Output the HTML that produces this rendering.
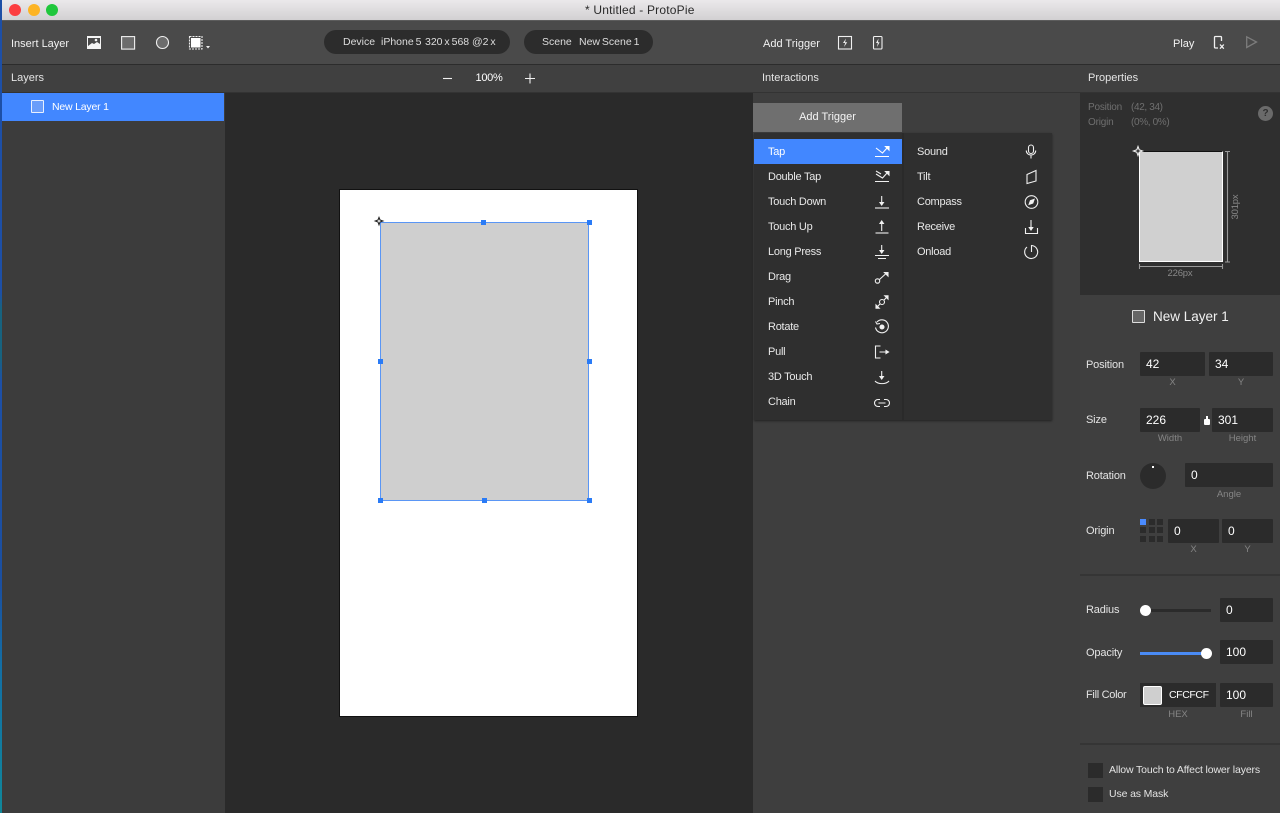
<!DOCTYPE html>
<html><head><meta charset="utf-8"><style>
html,body{margin:0;padding:0;width:1280px;height:813px;overflow:hidden;background:#3e3e3e}
body{position:relative;font-family:"Liberation Sans",sans-serif;font-size:11px;color:#e4e4e4}
div,svg{position:absolute}
.t{white-space:nowrap;line-height:14px;height:14px}
.c{text-align:center}
.p{letter-spacing:-.15px}
.i{background:#2b2b2b;border-radius:1px;color:#fff;font-size:12px;line-height:24px;height:24px;text-indent:6px}
.l{color:#858585;font-size:9.5px;text-align:center;line-height:12px;height:12px}
.m{color:#e8e8e8;font-size:11px;letter-spacing:-.25px;white-space:nowrap;line-height:14px;height:14px;left:0}
svg{fill:none;stroke:#f0f0f0;stroke-width:1.1;overflow:visible}
.d{width:5px;height:5px;background:#2a7bf6}
.g{width:6px;height:6px;background:#2b2b2b}
</style></head><body>
<!-- title bar -->
<div style="left:0;top:0;width:1280px;height:20px;background:linear-gradient(#ebe9eb,#d2d0d2)"></div>
<div style="left:0;top:20px;width:1280px;height:1px;background:#5c5c5c"></div>
<div style="left:9px;top:4px;width:12px;height:12px;border-radius:50%;background:#fc3d40"></div>
<div style="left:28px;top:4px;width:12px;height:12px;border-radius:50%;background:#fdb424"></div>
<div style="left:46px;top:4px;width:12px;height:12px;border-radius:50%;background:#1fc73c"></div>
<div class="t" style="left:585px;top:3px;color:#2a2a2a;font-size:12px;letter-spacing:.2px">* Untitled - ProtoPie</div>
<!-- toolbar -->
<div style="left:0;top:21px;width:1280px;height:43px;background:#4a4a4a"></div>
<div style="left:0;top:64px;width:1280px;height:1px;background:#2c2c2c"></div>
<div style="left:0;top:65px;width:1280px;height:27px;background:#404040"></div>
<div style="left:0;top:92px;width:1280px;height:1px;background:#333"></div>
<div class="t" style="left:11px;top:37px;color:#f2f2f2">Insert Layer</div>
<svg style="left:87px;top:36px" width="14" height="14"><rect x="0" y="0" width="14" height="13" fill="#f4f4f4" stroke="none"/><path d="M1 2h12v6l-3-2-3 2-2-1-4 3z" fill="#4a4a4a" stroke="none"/><circle cx="9" cy="4" r="1.3" fill="#f4f4f4" stroke="none"/></svg>
<svg style="left:121px;top:36px" width="14" height="14"><rect x=".6" y=".6" width="13" height="12.5" fill="#6c6c6c"/></svg>
<svg style="left:156px;top:36px" width="14" height="14"><circle cx="6.500" cy="6.500" r="6" fill="#6c6c6c"/></svg>
<svg style="left:189px;top:36px" width="14" height="14"><rect x=".5" y=".5" width="12.500" height="12.500" stroke-dasharray="2 1"/><rect x="2" y="2" width="9.500" height="9.500" fill="#fff" stroke="none"/></svg>
<svg style="left:206px;top:46px" width="5" height="3"><path d="M0 0h4L2 2.500z" fill="#eee" stroke="none"/></svg>
<div style="left:324px;top:30px;width:186px;height:24px;border-radius:12px;background:#2c2c2c"></div>
<div class="t" style="left:343px;top:35px;color:#ddd;font-size:10.500px">Device</div>
<div class="t" style="left:381px;top:35px;color:#ddd;font-size:10.500px;word-spacing:-1px">iPhone 5</div>
<div class="t" style="left:425px;top:35px;color:#ddd;font-size:10.500px;word-spacing:-1px">320 x 568</div>
<div class="t" style="left:472px;top:35px;color:#ddd;font-size:10.500px;word-spacing:-1px">@2 x</div>
<div style="left:524px;top:30px;width:129px;height:24px;border-radius:12px;background:#2c2c2c"></div>
<div class="t" style="left:542px;top:35px;color:#ddd;font-size:10.500px">Scene</div>
<div class="t" style="left:579px;top:35px;color:#ddd;font-size:10.500px;word-spacing:-1px">New Scene 1</div>
<div class="t" style="left:763px;top:37px;color:#f2f2f2">Add Trigger</div>
<svg style="left:838px;top:36px" width="14" height="14"><rect x=".5" y=".5" width="13" height="12.500"/><path d="M8 2.500L5 7h2.200L6 11l3.200-4.700H7z" fill="#f0f0f0" stroke="none"/></svg>
<svg style="left:873px;top:36px" width="12" height="14"><rect x=".5" y=".5" width="8.500" height="12.500" rx="1"/><path d="M5.500 2.500L3 7h1.800L4 11l2.600-4.700H5z" fill="#f0f0f0" stroke="none"/></svg>
<div class="t" style="left:1173px;top:37px;color:#f2f2f2">Play</div>
<svg style="left:1214px;top:36px" width="14" height="14"><path d="M7.500 5V1.500q0-1-1-1H1.500q-1 0-1 1V11q0 1 1 1H4" stroke-width="1.300"/><path d="M6 8.500l3.800 4.200M9.800 8.500L6 12.700" stroke-width="1.300"/></svg>
<svg style="left:1246px;top:36px" width="12" height="12"><path d="M.7 .8v10.700L10.500 6z" stroke="#7c7c7c" stroke-width="1.300"/></svg>
<div class="t" style="left:11px;top:71px">Layers</div>
<svg style="left:443px;top:78px" width="10" height="2"><path d="M0 .5h9"/></svg>
<div class="t c" style="left:469px;top:71px;width:40px;color:#fff;font-size:11px;letter-spacing:-.3px">100%</div>
<svg style="left:525px;top:73px" width="11" height="11"><path d="M0 5.500h10M5 .5v10"/></svg>
<div class="t" style="left:762px;top:71px">Interactions</div>
<div class="t" style="left:1088px;top:71px">Properties</div>
<!-- left -->
<div style="left:0;top:93px;width:225px;height:720px;background:#3c3c3c"></div>
<div style="left:2px;top:93px;width:222px;height:28px;background:#4287ff"></div>
<div style="left:31px;top:100px;width:11px;height:11px;border:1.500px solid #e8f0ff;background:#6a9dfa;border-radius:1px"></div>
<div class="t" style="left:52px;top:100px;color:#fff;font-size:10.500px;letter-spacing:-.2px">New Layer 1</div>
<!-- desktop sliver at the left edge -->
<div style="left:0;top:0;width:2px;height:813px;background:linear-gradient(#1d4fa6 0,#1d4fa6 36%,#17637f 38%,#17637f 44%,#1d4fa6 47%,#1b4fa0 72%,#136fa5 82%,#10879a 100%)"></div>
<!-- canvas -->
<div style="left:225px;top:93px;width:528px;height:720px;background:#2a2a2a"></div>
<div style="left:340px;top:190px;width:297px;height:526px;background:#fff;box-shadow:0 0 0 1px #111"></div>
<div style="left:381px;top:223px;width:207px;height:277px;background:#cfcfcf;box-shadow:0 0 0 1px #5a96f5"></div>
<div class="d" style="left:481px;top:220px"></div>
<div class="d" style="left:587px;top:220px"></div>
<div class="d" style="left:378px;top:359px"></div>
<div class="d" style="left:587px;top:359px"></div>
<div class="d" style="left:378px;top:498px"></div>
<div class="d" style="left:482px;top:498px"></div>
<div class="d" style="left:587px;top:498px"></div>
<svg style="left:375px;top:217px" width="9" height="9"><path d="M4 .5L5 3l2.800 1L5 5 4 7.800 3 5 .3 4 3 3z" fill="#fff" stroke="#222"/></svg>
<!-- interactions -->
<div style="left:753px;top:93px;width:327px;height:720px;background:#3e3e3e"></div>
<div style="left:753px;top:103px;width:149px;height:29px;background:#6f6f6f"></div>
<div class="t c" style="left:753px;top:110px;width:149px;color:#f4f4f4;font-size:11px">Add Trigger</div>
<div style="left:754px;top:133px;width:298px;height:287px;background:#2f2f2f;box-shadow:0 1px 2px #222"></div>
<div style="left:902px;top:133px;width:2px;height:287px;background:#2a2a2a"></div>
<div style="left:754px;top:139px;width:148px;height:25px;background:#4287ff"></div>
<div class="m" style="left:768px;top:145px;color:#fff">Tap</div>
<div class="m" style="left:768px;top:170px">Double Tap</div>
<div class="m" style="left:768px;top:195px">Touch Down</div>
<div class="m" style="left:768px;top:220px">Touch Up</div>
<div class="m" style="left:768px;top:245px">Long Press</div>
<div class="m" style="left:768px;top:270px">Drag</div>
<div class="m" style="left:768px;top:295px">Pinch</div>
<div class="m" style="left:768px;top:320px">Rotate</div>
<div class="m" style="left:768px;top:345px">Pull</div>
<div class="m" style="left:768px;top:370px">3D Touch</div>
<div class="m" style="left:768px;top:395px">Chain</div>
<div class="m" style="left:917px;top:145px">Sound</div>
<div class="m" style="left:917px;top:170px">Tilt</div>
<div class="m" style="left:917px;top:195px">Compass</div>
<div class="m" style="left:917px;top:220px">Receive</div>
<div class="m" style="left:917px;top:245px">Onload</div>
<!-- menu icons: single coordinate space -->
<svg style="left:0;top:0" width="1280" height="813">
<g stroke="#fff">
<path d="M876 148l6.500 5 5-5.500M875 156.500h14"/><path d="M885.500 146.500h3.500v3.500z" fill="#fff"/>
</g>
<g>
<path d="M876 171l5 3M876 174l6.500 4 5-5.500M875 181.500h14"/><path d="M885.500 171.500h3.500v3.500z" fill="#f0f0f0"/>
<path d="M881.700 196v7"/><path d="M880 202.500h3.400l-1.700 2.500z" fill="#f0f0f0"/><path d="M875 208h14"/>
<path d="M881.700 231v-8"/><path d="M880 223.500h3.400l-1.700-2.500z" fill="#f0f0f0"/><path d="M875.500 233h13"/>
<path d="M881.700 245v6"/><path d="M880 250.500h3.400l-1.700 2.500z" fill="#f0f0f0"/><path d="M875 255.500h14M878 258.500h8"/>
<circle cx="877.500" cy="281" r="2.200"/><path d="M879.500 279.500l6-5.500"/><path d="M884.500 272.500h3.500v3.500z" fill="#f0f0f0"/>
<circle cx="882" cy="302" r="2.500"/><path d="M880 304l-3 3M884 300l3-3"/><path d="M876 305v3.200h3.200zM888 299v-3.200h-3.200z" fill="#f0f0f0"/>
<path d="M877 322a6.500 6.500 0 1 1-1.500 5.500M875.500 321.500l1.500 2.500 3-.5"/><circle cx="882" cy="327" r="2" fill="#f0f0f0"/>
<path d="M880.500 346h-5v12h5M879.500 352h7"/><path d="M886 350.500v3l2.500-1.500z" fill="#f0f0f0"/>
<path d="M881.700 371v6"/><path d="M880 376.500h3.400l-1.700 2.500z" fill="#f0f0f0"/><path d="M875 381c3 3.500 11 3.500 14 0"/>
<path d="M880 399.500h-2a3.500 3.500 0 0 0 0 7h2M884 399.500h2a3.500 3.500 0 0 1 0 7h-2M878.500 403h7"/>
<rect x="1028.500" y="145" width="5" height="8.500" rx="2.500"/><path d="M1026.300 150.500c0 6 9.400 6 9.400 0M1031 155.500v3"/>
<path d="M1027 174.500l9-4v10.500l-9 2.500z"/>
<circle cx="1031.500" cy="202" r="6.300"/><path d="M1035 198.500l-5 1.800-1.800 5 5-1.800z" fill="#f0f0f0" stroke="none"/>
<path d="M1031 220v8"/><path d="M1029.300 227.500h3.400l-1.700 2.500z" fill="#f0f0f0"/><path d="M1025.500 228v5.500h12V228"/>
<path d="M1027 247a6.500 6.500 0 1 0 4.500-1.500v6.500"/>
</g></svg>
<!-- properties -->
<div style="left:1080px;top:93px;width:200px;height:720px;background:#3f3f3f"></div>
<div style="left:1080px;top:93px;width:200px;height:202px;background:#2f2f2f"></div>
<div class="t" style="left:1088px;top:101px;color:#6f6f6f;font-size:10px;letter-spacing:-.2px">Position</div>
<div class="t" style="left:1131px;top:101px;color:#6f6f6f;font-size:10px;letter-spacing:-.35px">(42, 34)</div>
<div class="t" style="left:1088px;top:116px;color:#6f6f6f;font-size:10px;letter-spacing:-.2px">Origin</div>
<div class="t" style="left:1131px;top:116px;color:#6f6f6f;font-size:10px;letter-spacing:-.35px">(0%, 0%)</div>
<div class="c" style="left:1258px;top:106px;width:15px;height:15px;border-radius:50%;background:#6a6a6a;color:#2f2f2f;font-size:10px;font-weight:bold;line-height:15px">?</div>
<div style="left:1139px;top:151px;width:84px;height:111px;background:#d0d0d0;border-left:1px solid #fff;border-bottom:1px solid #fff;border-right:1px solid #fff;border-top:1px solid #111;box-sizing:border-box"></div>
<svg style="left:1133px;top:146px" width="11" height="11"><path d="M5 .5l1.200 3.300 3.300 1.200-3.300 1.200L5 9.500 3.800 6.200.5 5l3.300-1.200z" fill="#2f2f2f" stroke="#eee"/></svg>
<svg style="left:1225px;top:151px" width="6" height="112"><path d="M0 .5h5M2.500 .5v111M0 111h5" stroke="#999"/></svg>
<svg style="left:1139px;top:264px" width="85" height="6"><path d="M.5 0v5M.5 2.500h83M83.500 0v5" stroke="#999"/></svg>
<div class="t c" style="left:1219px;top:200px;width:34px;color:#888;font-size:9.500px;letter-spacing:-.2px;transform:rotate(-90deg);transform-origin:center">301px</div>
<div class="t c" style="left:1160px;top:267px;width:40px;color:#888;font-size:9.500px;letter-spacing:-.2px">226px</div>
<div style="left:1132px;top:310px;width:11px;height:11px;border:1px solid #ddd;background:#666;border-radius:1px"></div>
<div class="t" style="left:1153px;top:310px;font-size:13.500px;color:#f2f2f2">New Layer 1</div>

<div class="t p" style="left:1086px;top:358px">Position</div>
<div class="i" style="left:1140px;top:352px;width:65px">42</div>
<div class="i" style="left:1209px;top:352px;width:64px">34</div>
<div class="l" style="left:1140px;top:377px;width:65px">X</div>
<div class="l" style="left:1209px;top:377px;width:64px">Y</div>
<div class="t p" style="left:1086px;top:413px">Size</div>
<div class="i" style="left:1140px;top:408px;width:60px">226</div>
<div style="left:1204px;top:419px;width:6px;height:6px;background:#fff;border-radius:1px"></div>
<div style="left:1206px;top:416px;width:2px;height:3px;background:#fff"></div>
<div class="i" style="left:1212px;top:408px;width:61px">301</div>
<div class="l" style="left:1140px;top:433px;width:60px">Width</div>
<div class="l" style="left:1212px;top:433px;width:61px">Height</div>
<div class="t p" style="left:1086px;top:469px">Rotation</div>
<div style="left:1140px;top:463px;width:26px;height:26px;border-radius:50%;background:#2b2b2b"></div>
<div style="left:1152px;top:466px;width:2px;height:2px;background:#fff"></div>
<div class="i" style="left:1185px;top:463px;width:88px">0</div>
<div class="l" style="left:1185px;top:489px;width:88px">Angle</div>
<div class="t p" style="left:1086px;top:524px">Origin</div>
<div class="g" style="left:1140px;top:519px;background:#4a8bff"></div>
<div class="g" style="left:1149px;top:519px"></div>
<div class="g" style="left:1157px;top:519px"></div>
<div class="g" style="left:1140px;top:527px"></div>
<div class="g" style="left:1149px;top:527px"></div>
<div class="g" style="left:1157px;top:527px"></div>
<div class="g" style="left:1140px;top:536px"></div>
<div class="g" style="left:1149px;top:536px"></div>
<div class="g" style="left:1157px;top:536px"></div>
<div class="i" style="left:1168px;top:519px;width:51px">0</div>
<div class="i" style="left:1222px;top:519px;width:51px">0</div>
<div class="l" style="left:1168px;top:544px;width:51px">X</div>
<div class="l" style="left:1222px;top:544px;width:51px">Y</div>
<div style="left:1080px;top:574px;width:200px;height:2px;background:#353535"></div>
<div class="t p" style="left:1086px;top:603px">Radius</div>
<div style="left:1140px;top:609px;width:71px;height:3px;background:#2b2b2b"></div>
<div style="left:1140px;top:605px;width:11px;height:11px;border-radius:50%;background:#fff"></div>
<div class="i" style="left:1220px;top:598px;width:53px">0</div>
<div class="t p" style="left:1086px;top:646px">Opacity</div>
<div style="left:1140px;top:652px;width:66px;height:3px;background:#4a8bf5"></div>
<div style="left:1201px;top:648px;width:11px;height:11px;border-radius:50%;background:#fff"></div>
<div class="i" style="left:1220px;top:640px;width:53px">100</div>
<div class="t" style="left:1086px;top:688px;letter-spacing:-.3px">Fill Color</div>
<div style="left:1140px;top:683px;width:76px;height:24px;background:#2b2b2b"></div>
<div style="left:1143px;top:686px;width:17px;height:17px;background:#cfcfcf;border:1px solid #fff;border-radius:2px"></div>
<div class="t" style="left:1169px;top:688px;color:#fff;font-size:10.500px;letter-spacing:-.4px">CFCFCF</div>
<div class="i" style="left:1220px;top:683px;width:53px">100</div>
<div class="l" style="left:1140px;top:709px;width:76px">HEX</div>
<div class="l" style="left:1220px;top:709px;width:53px">Fill</div>
<div style="left:1080px;top:743px;width:200px;height:2px;background:#353535"></div>
<div style="left:1088px;top:763px;width:15px;height:15px;background:#2b2b2b"></div>
<div class="t" style="left:1109px;top:763px;font-size:10.500px;letter-spacing:-.13px">Allow Touch to Affect lower layers</div>
<div style="left:1088px;top:787px;width:15px;height:15px;background:#2b2b2b"></div>
<div class="t" style="left:1109px;top:787px;font-size:10.500px;letter-spacing:-.13px">Use as Mask</div>
</body></html>
